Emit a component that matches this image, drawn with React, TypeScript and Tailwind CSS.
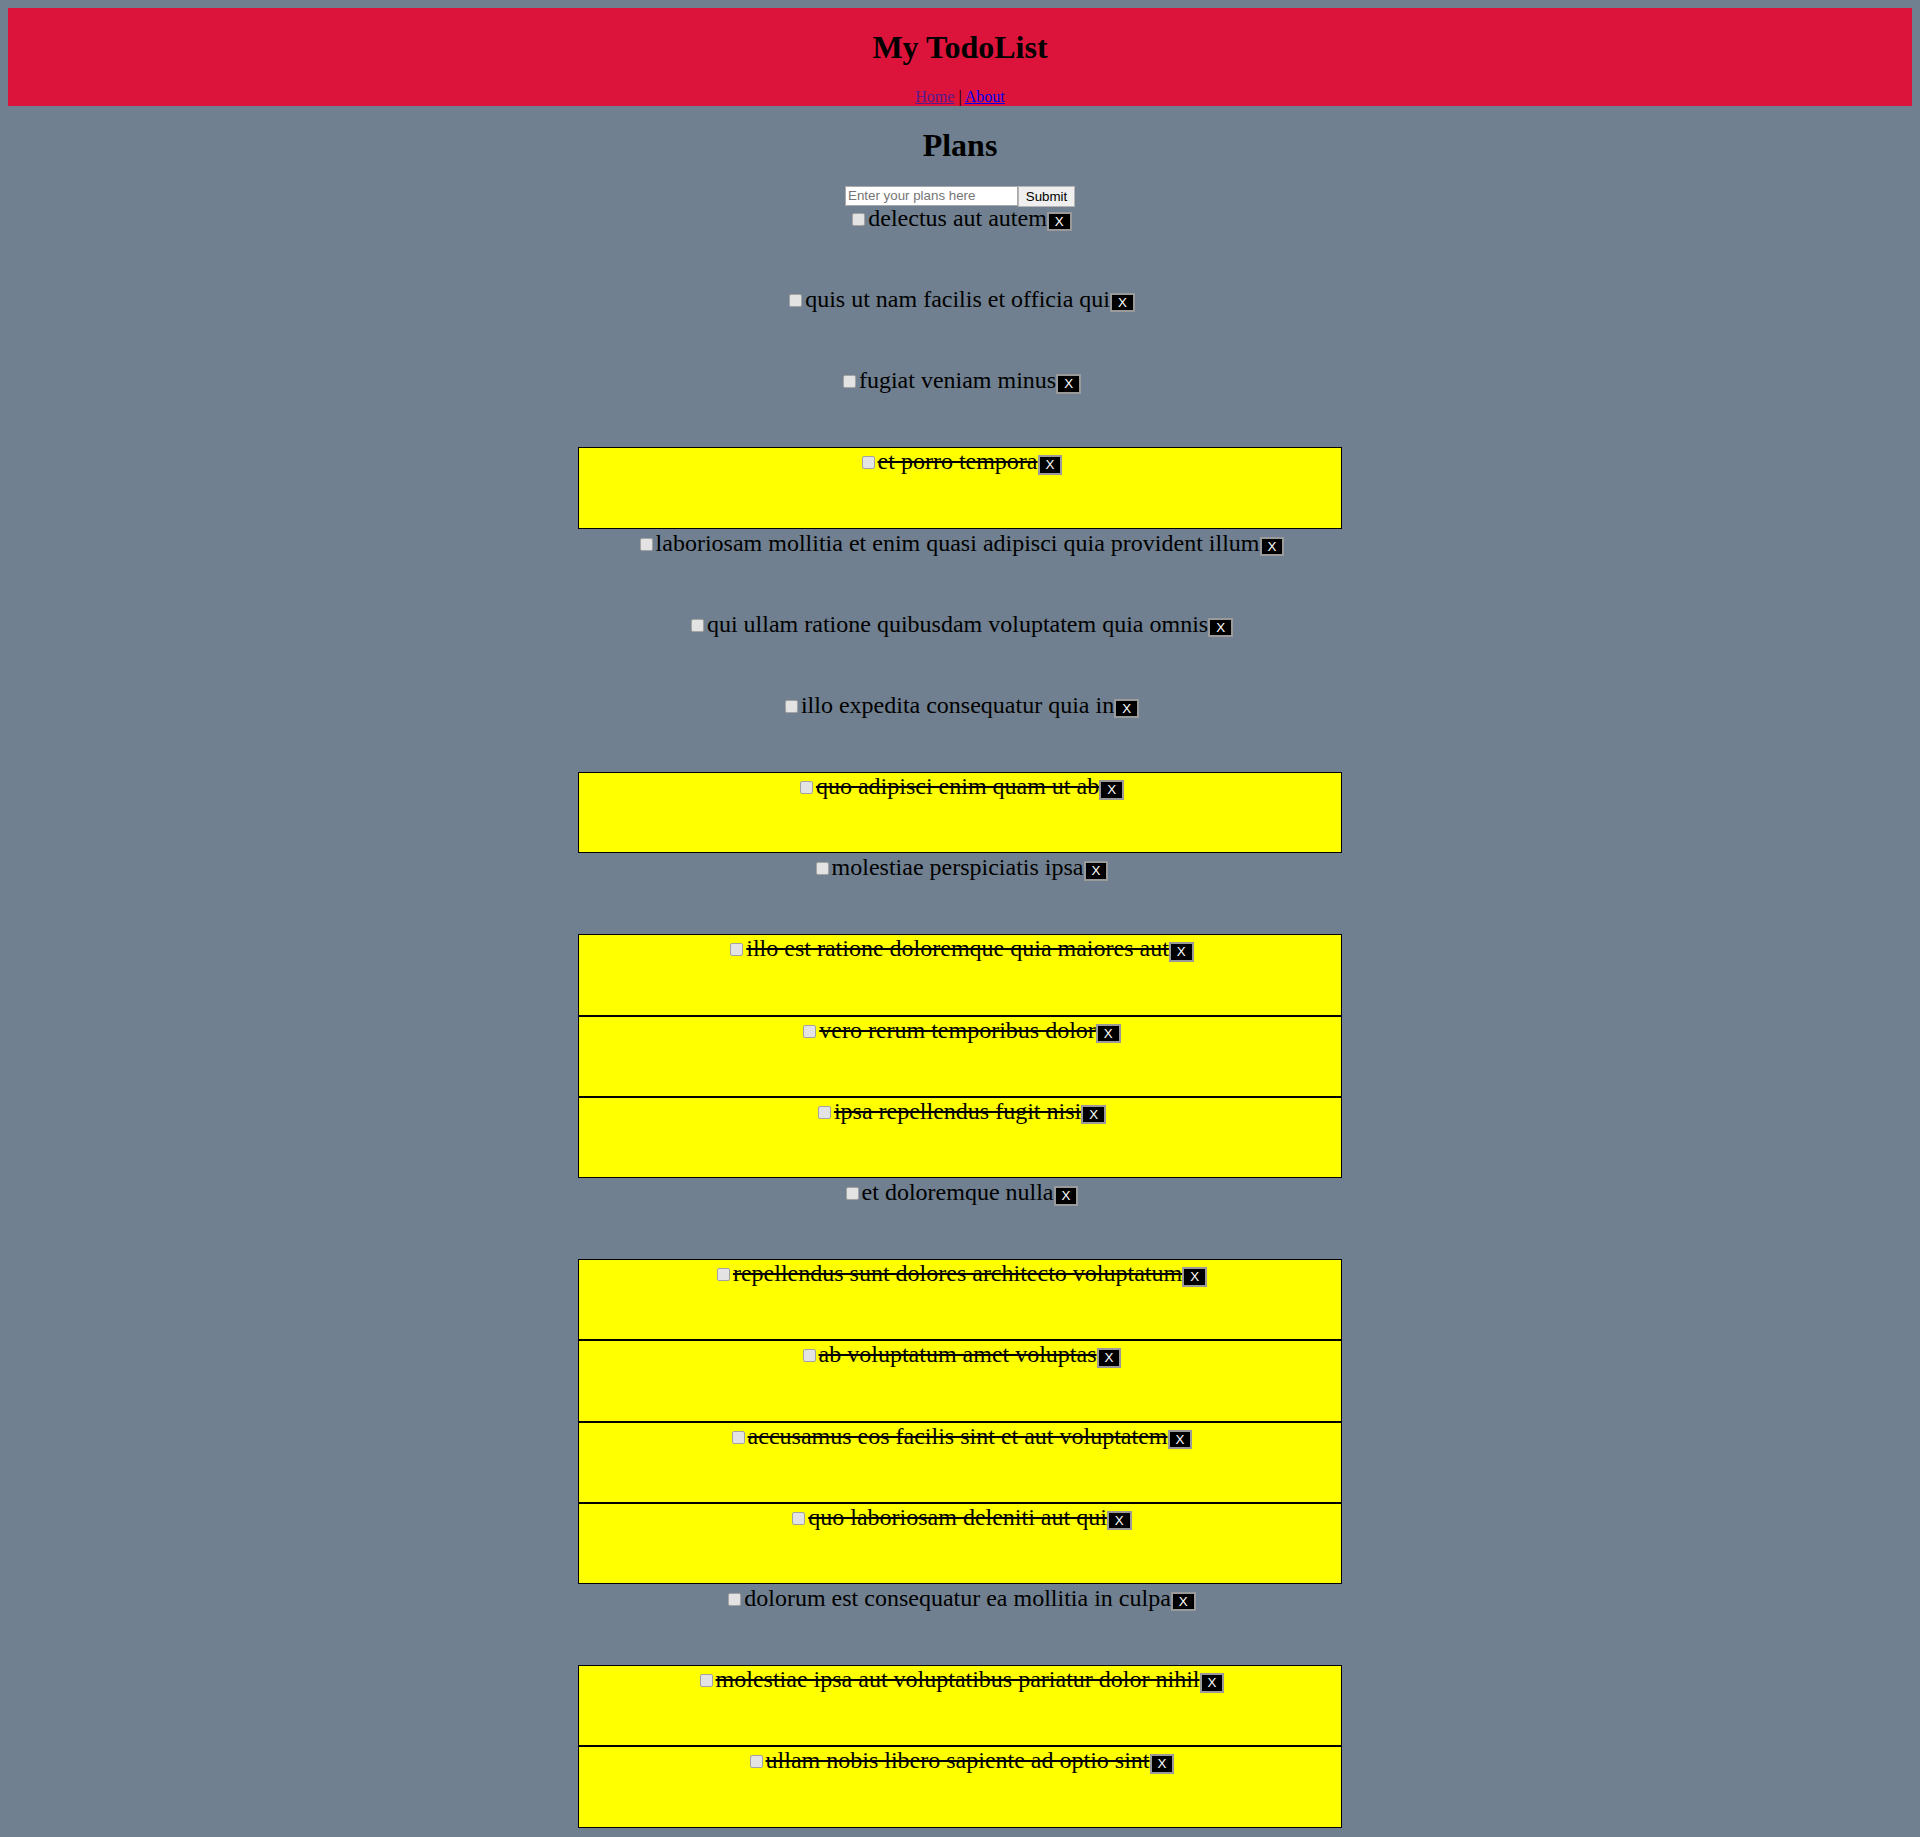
import React from 'react';

type Todo = { title: string; completed: boolean };

const todos: Todo[] = [
  { title: 'delectus aut autem', completed: false },
  { title: 'quis ut nam facilis et officia qui', completed: false },
  { title: 'fugiat veniam minus', completed: false },
  { title: 'et porro tempora', completed: true },
  { title: 'laboriosam mollitia et enim quasi adipisci quia provident illum', completed: false },
  { title: 'qui ullam ratione quibusdam voluptatem quia omnis', completed: false },
  { title: 'illo expedita consequatur quia in', completed: false },
  { title: 'quo adipisci enim quam ut ab', completed: true },
  { title: 'molestiae perspiciatis ipsa', completed: false },
  { title: 'illo est ratione doloremque quia maiores aut', completed: true },
  { title: 'vero rerum temporibus dolor', completed: true },
  { title: 'ipsa repellendus fugit nisi', completed: true },
  { title: 'et doloremque nulla', completed: false },
  { title: 'repellendus sunt dolores architecto voluptatum', completed: true },
  { title: 'ab voluptatum amet voluptas', completed: true },
  { title: 'accusamus eos facilis sint et aut voluptatem', completed: true },
  { title: 'quo laboriosam deleniti aut qui', completed: true },
  { title: 'dolorum est consequatur ea mollitia in culpa', completed: false },
  { title: 'molestiae ipsa aut voluptatibus pariatur dolor nihil', completed: true },
  { title: 'ullam nobis libero sapiente ad optio sint', completed: true },
];

function TodoItem({ todo }: { todo: Todo }) {
  return (
    <div
      className={
        todo.completed
          ? 'box-content w-[40%] h-[79.2px] mx-auto border border-black bg-[#ffff00] text-center'
          : 'box-content w-[40%] h-[79.2px] mx-auto border border-transparent text-center'
      }
    >
      <input
        type="checkbox"
        className="appearance-none inline-block w-[13px] h-[13px] m-[3px_3px_0_4px] align-baseline bg-[#e3e3e3] border border-[#a3a3a3] rounded-[2px]"
      />
      <span className={todo.completed ? 'line-through' : ''}>{todo.title}</span>
      <button className="inline-block align-baseline bg-black text-white border-2 border-[#9a9a9a] px-[6px] py-0 text-[13.33px] leading-[15.5px] font-['Liberation_Sans',Arial,sans-serif]">
        X
      </button>
    </div>
  );
}

export default function App() {
  return (
    <div className="min-h-screen bg-[#708090] p-2 font-['Liberation_Serif','Times_New_Roman',serif] text-[24px] leading-[normal] text-black">
      <div className="bg-[#dc143c] flow-root text-center">
        <h1 className="my-[21.44px] text-[32px] font-bold leading-[normal]">My TodoList</h1>
        <div className="text-[16px] leading-[normal]">
          <a href="#" className="text-[#551a8b] underline">Home</a> | <a href="#" className="text-[#0000ee] underline">About</a>
        </div>
      </div>

      <h1 className="my-[21.44px] text-center text-[32px] font-bold leading-[normal]">Plans</h1>

      <form className="flex justify-center items-start h-[18px]" onSubmit={(e) => e.preventDefault()}>
        <input
          type="text"
          placeholder="Enter your plans here"
          className="w-[173px] h-[20px] bg-white border border-[#a9a9a9] px-[2px] text-[13.33px] font-['Liberation_Sans',Arial,sans-serif] placeholder:text-[#757575] outline-none"
        />
        <button
          type="submit"
          className="w-[57px] h-[21px] bg-[#efefef] border border-[#b5b5b5] text-[13.33px] font-['Liberation_Sans',Arial,sans-serif] text-black"
        >
          Submit
        </button>
      </form>

      <div>
        {todos.map((t, i) => (
          <TodoItem key={i} todo={t} />
        ))}
      </div>
    </div>
  );
}
